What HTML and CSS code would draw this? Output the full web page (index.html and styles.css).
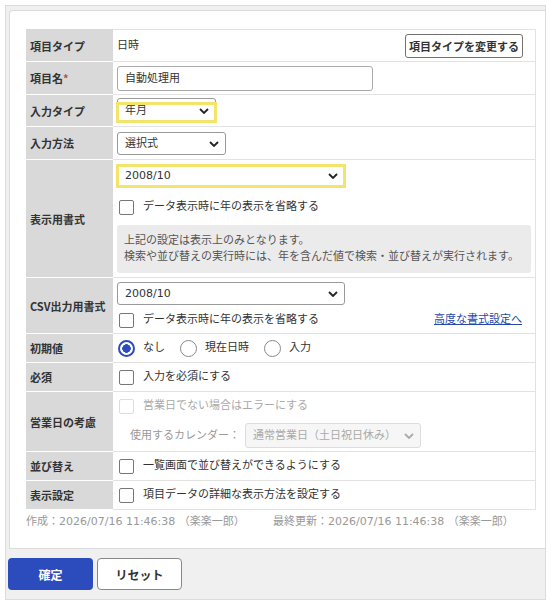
FILE: index.html
```html
<!DOCTYPE html>
<html lang="ja">
<head>
    <meta charset="UTF-8">
    <title>項目設定</title>
    <link rel="stylesheet" href="styles.css">
</head>
<body>
    <div class="frame">
        <div class="panel">
            <div class="form">
                <!-- 項目タイプ -->
                <div class="row row-type">
                    <div class="label">項目タイプ</div>
                    <div class="value">
                        <div class="line between">
                            <span>日時</span>
                            <button class="btn-small">項目タイプを変更する</button>
                        </div>
                    </div>
                </div>
                <div class="row row-name">
                    <div class="label">項目名<span class="required">*</span></div>
                    <div class="value"><div class="text-input">自動処理用</div></div>
                </div>
                <div class="row row-input-type">
                    <div class="label">入力タイプ</div>
                    <div class="value">
                        <div class="select select-type highlight-low">
                            <span>年月</span>
                            <svg class="chevron" width="10" height="6" viewBox="0 0 10 6"><polyline points="1,1 5,5 9,1" /></svg>
                        </div>
                    </div>
                </div>
                <div class="row row-method">
                    <div class="label">入力方法</div>
                    <div class="value">
                        <div class="select select-method">
                            <span>選択式</span>
                            <svg class="chevron" width="10" height="6" viewBox="0 0 10 6"><polyline points="1,1 5,5 9,1" /></svg>
                        </div>
                    </div>
                </div>

                <!-- 書式 -->
                <div class="row">
                    <div class="label">表示用書式</div>
                    <div class="value">
                        <div class="select select-format highlight focus">
                            <span>2008/10</span>
                            <svg class="chevron" width="10" height="6" viewBox="0 0 10 6"><polyline points="1,1 5,5 9,1" /></svg>
                        </div>
                        <label class="line check-line gap-top">
                            <span class="checkbox"></span>データ表示時に年の表示を省略する
                        </label>
                        <div class="note">
                            上記の設定は表示上のみとなります。<br>
                            検索や並び替えの実行時には、年を含んだ値で検索・並び替えが実行されます。
                        </div>
                    </div>
                </div>
                <div class="row row-csv">
                    <div class="label">CSV出力用書式</div>
                    <div class="value">
                        <div class="select select-format select-csv">
                            <span>2008/10</span>
                            <svg class="chevron" width="10" height="6" viewBox="0 0 10 6"><polyline points="1,1 5,5 9,1" /></svg>
                        </div>
                        <div class="line between small-gap">
                            <label class="check-line">
                                <span class="checkbox"></span>データ表示時に年の表示を省略する
                            </label>
                            <a href="#" class="link">高度な書式設定へ</a>
                        </div>
                    </div>
                </div>

                <div class="row">
                    <div class="label">初期値</div>
                    <div class="value">
                        <div class="line radios">
                            <label class="radio-item"><span class="radio checked"></span>なし</label>
                            <label class="radio-item"><span class="radio"></span>現在日時</label>
                            <label class="radio-item"><span class="radio"></span>入力</label>
                        </div>
                    </div>
                </div>
                <div class="row">
                    <div class="label">必須</div>
                    <div class="value"><label class="line check-line"><span class="checkbox"></span>入力を必須にする</label></div>
                </div>
                <div class="row row-calendar">
                    <div class="label">営業日の考慮</div>
                    <div class="value">
                        <label class="line check-line disabled"><span class="checkbox"></span>営業日でない場合はエラーにする</label>
                        <div class="calendar-line">
                            <span class="muted">使用するカレンダー：</span>
                            <div class="select select-calendar">
                                <span>通常営業日（土日祝日休み）</span>
                                <svg class="chevron" width="10" height="6" viewBox="0 0 10 6"><polyline points="1,1 5,5 9,1" /></svg>
                            </div>
                        </div>
                    </div>
                </div>
                <div class="row">
                    <div class="label">並び替え</div>
                    <div class="value"><label class="line check-line"><span class="checkbox"></span>一覧画面で並び替えができるようにする</label></div>
                </div>
                <div class="row">
                    <div class="label">表示設定</div>
                    <div class="value"><label class="line check-line"><span class="checkbox"></span>項目データの詳細な表示方法を設定する</label></div>
                </div>
            </div>

            <div class="meta">
                <span class="meta-created">作成：2026/07/16 11:46:38 （楽楽一郎）</span>
                <span>最終更新：2026/07/16 11:46:38 （楽楽一郎）</span>
            </div>
        </div>

        <!-- Buttons -->
        <div class="actions">
            <button class="btn btn-primary">確定</button>
            <button class="btn btn-default">リセット</button>
        </div>
    </div>
</body>
</html>
```

FILE: styles.css
```css
/* General */
body {
    margin: 0;
    font-family: "DejaVu Sans", "Noto Sans CJK JP", sans-serif;
    font-size: 11px;
    line-height: 16px;
    color: #333;
    background: #fff;
}

/* Outer frame */
.frame {
    margin: 5px 0 0 5px;
    width: 536px;
    padding: 4px 0 0 3px;
    border: 1px solid #dcdcdc;
    background: #f0f0f0;
}

.panel {
    background: #fff;
    border: 1px solid #dcdcdc;
    border-right: none;
    border-radius: 4px 0 0 0;
    padding: 18px 0 18px 16px;
}

/* Form rows */
.form {
    width: 510px;
}

.row {
    display: flex;
}

.label {
    display: flex;
    align-items: center;
    flex: 0 0 87px;
    box-sizing: border-box;
    padding: 0 4px;
    background: #d9d9d9;
    border-bottom: 1px solid #fff;
    font-family: "Noto Sans CJK JP", sans-serif;
    font-weight: bold;
    white-space: nowrap;
}

.value {
    flex: 1;
    padding: 4px;
    border-bottom: 1px solid #e2e2e2;
    border-right: 1px solid #e2e2e2;
}

.row-type .label {
    border-top: 1px solid #d9d9d9;
}

.row-type .value {
    border-top: 1px solid #e2e2e2;
    padding-bottom: 3px;
}

.row-name .value {
    padding-bottom: 3px;
}

.row-input-type .value {
    padding: 3px 4px;
}

.row-method .value {
    padding-top: 5px;
}

.row-csv .value,
.row-calendar .value {
    padding-bottom: 3px;
}

.required {
    color: #b5533c;
}

.line {
    display: flex;
    align-items: center;
    height: 20px;
}

.between {
    justify-content: space-between;
}

.row-type .line {
    height: 24px;
}

.gap-top {
    margin-top: 9px;
}

.small-gap {
    margin-top: 5px;
}

/* Small button */
.btn-small {
    height: 24px;
    width: 118px;
    margin-right: 8px;
    padding: 0;
    font-family: "Noto Sans CJK JP", sans-serif;
    font-size: 11px;
    font-weight: bold;
    color: #333;
    background: #fff;
    border: 1px solid #707070;
    border-radius: 3px;
}

/* Text input */
.text-input {
    box-sizing: border-box;
    width: 256px;
    height: 25px;
    line-height: 23px;
    padding: 0 7px;
    border: 1px solid #aaa;
    border-radius: 3px;
}

/* Selects */
.select {
    position: relative;
    box-sizing: border-box;
    display: flex;
    align-items: center;
    justify-content: space-between;
    height: 24px;
    padding: 0 6px 0 7px;
    border: 1px solid #999;
    border-radius: 3px;
    background: #fff;
}

.chevron {
    fill: none;
    stroke: #222;
    stroke-width: 1.8;
}

.select-type {
    width: 99px;
    height: 25px;
}

.select-method {
    width: 109px;
    height: 23px;
}

.select-format {
    width: 228px;
}

.select-csv {
    height: 23px;
}

.select-format.focus {
    border-left-color: #7f8fc4;
}

.select-calendar {
    width: 176px;
    height: 25px;
    color: #aaa;
    background: #f6f6f6;
    border-color: #ddd;
}

.select-calendar .chevron {
    stroke: #aaa;
}

/* Yellow highlight marks */
.highlight::after,
.highlight-low::after {
    content: "";
    position: absolute;
    left: -2px;
    right: -2px;
    border: 3px solid #f3e46b;
    pointer-events: none;
}

.highlight::after {
    top: -1px;
    bottom: -1px;
}

.highlight-low::after {
    top: 3px;
    bottom: -1px;
}

/* Checkbox */
.check-line {
    display: flex;
    align-items: center;
}

.checkbox {
    box-sizing: border-box;
    width: 15px;
    height: 15px;
    margin: 0 9px 0 2px;
    border: 1.5px solid #777;
    border-radius: 2px;
    background: #fff;
}

.disabled {
    color: #aaa;
}

.disabled .checkbox {
    border-color: #ddd;
}

/* Note box */
.note {
    margin-top: 8px;
    padding: 8px 7px;
    line-height: 16px;
    color: #555;
    background: #ebebeb;
    border-radius: 3px;
}

.link {
    margin-right: 9px;
    color: #2748a8;
    text-decoration: underline;
}

/* Radios */
.radio-item {
    display: flex;
    align-items: center;
    margin-right: 14px;
}

.radio {
    box-sizing: border-box;
    width: 17px;
    height: 17px;
    margin: 0 8px 0 1px;
    border: 1.5px solid #888;
    border-radius: 50%;
    background: #fff;
}

.radio.checked {
    border: 2px solid #2b4cc0;
    background: radial-gradient(circle, #2b4cc0 0, #2b4cc0 4px, #fff 4.5px);
}

/* Calendar row */
.calendar-line {
    display: flex;
    align-items: center;
    margin-top: 7px;
    padding-left: 13px;
}

.muted {
    color: #999;
    margin-right: 5px;
}

/* Meta */
.meta {
    display: flex;
    margin-top: 4px;
    color: #999;
}

.meta-created {
    width: 247px;
}

/* Action buttons */
.actions {
    display: flex;
    gap: 4px;
    margin-left: -1px;
    padding: 9px 0;
}

.btn {
    width: 85px;
    height: 32px;
    font-family: "Noto Sans CJK JP", sans-serif;
    font-size: 12px;
    font-weight: bold;
    border-radius: 4px;
}

.btn-primary {
    color: #fff;
    background: #2c4bbd;
    border: none;
}

.btn-default {
    color: #333;
    background: #fff;
    border: 1px solid #888;
}
```
